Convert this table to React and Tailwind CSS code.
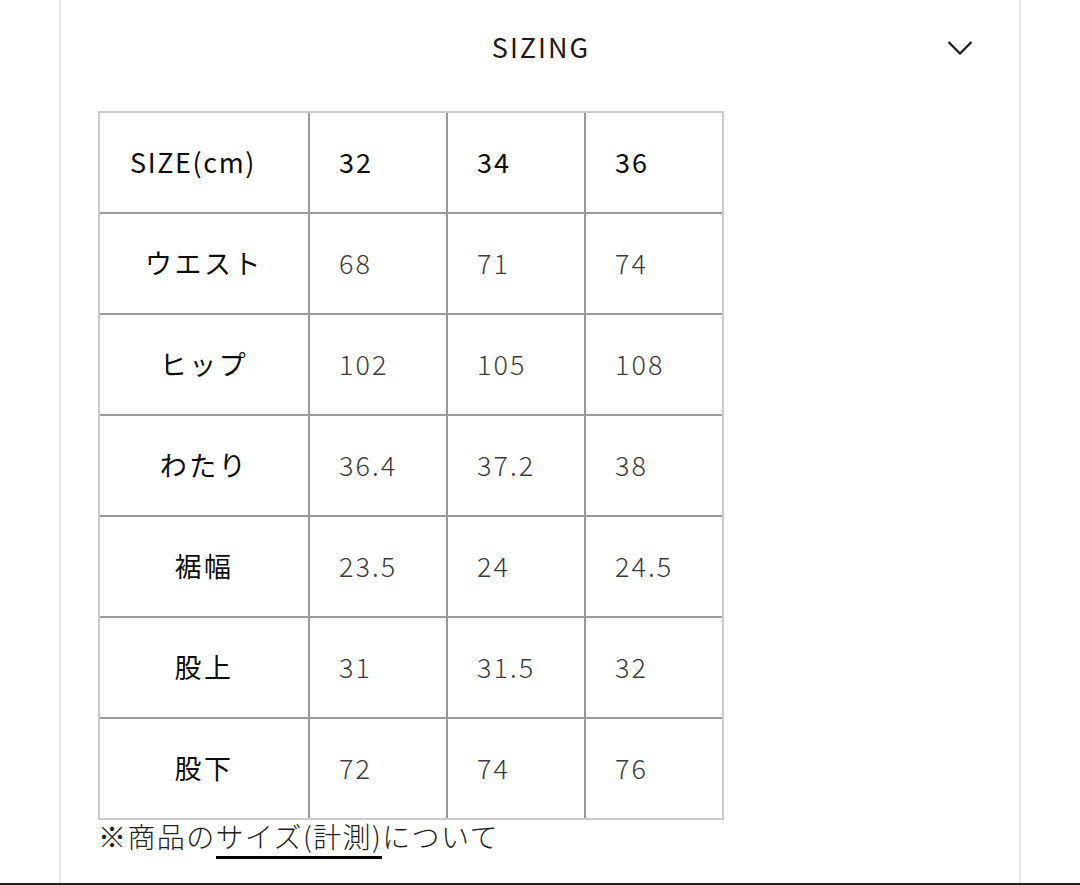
import React from 'react';

const rows = [
  { label: 'ウエスト', values: ['68', '71', '74'] },
  { label: 'ヒップ', values: ['102', '105', '108'] },
  { label: 'わたり', values: ['36.4', '37.2', '38'] },
  { label: '裾幅', values: ['23.5', '24', '24.5'] },
  { label: '股上', values: ['31', '31.5', '32'] },
  { label: '股下', values: ['72', '74', '76'] },
];

const font = { fontFamily: '"Noto Sans CJK JP", "Noto Sans", sans-serif' };

const Cell = ({ children, first, lastCol, lastRow, head, extra = '' }) => (
  <div
    className={`flex items-center border-[#9a9a9a] ${lastCol ? '' : 'border-r-2'} ${
      lastRow ? 'h-[99px]' : 'h-[101px] border-b-2'
    } ${first ? 'justify-center tracking-[2.5px]' : 'pl-[29px] tracking-[2px]'} ${
      head ? 'text-[#0d0d0d] font-normal' : 'text-[#3c3c3c] font-light'
    } ${extra}`}
  >
    {children}
  </div>
);

const App = () => {
  return (
    <div className="bg-white w-[1080px] h-[885px] flex flex-col" style={font}>
      <div className="mx-[59px] flex-1 border-x-2 border-[#e8e8e8] flex flex-col">
        {/* Header */}
        <div className="relative h-[111px] flex items-start justify-center pt-[27px]">
          <span className="text-[27px] leading-[40px] tracking-[2px] pl-[2px] text-[#1a1a1a]">SIZING</span>
          <svg
            className="absolute right-[46px] top-[40px]"
            width="26"
            height="16"
            viewBox="0 0 26 16"
            fill="none"
            stroke="#1a1a1a"
            strokeWidth="2.2"
          >
            <polyline points="1.5,2 13,13.5 24.5,2" />
          </svg>
        </div>

        {/* Table */}
        <div className="pl-[37px]">
          <div className="w-[626px] border-2 border-[#cbcbcb] grid grid-cols-[210px_138px_138px_136px] text-[27px]">
            <Cell first head extra="!tracking-[1.6px] pr-[22px]">SIZE(cm)</Cell>
            <Cell head>32</Cell>
            <Cell head>34</Cell>
            <Cell head lastCol>36</Cell>
            {rows.map((r, i) => (
              <React.Fragment key={r.label}>
                <Cell first head lastRow={i === rows.length - 1}>
                  {r.label}
                </Cell>
                {r.values.map((v, j) => (
                  <Cell key={j} lastCol={j === 2} lastRow={i === rows.length - 1}>
                    {v}
                  </Cell>
                ))}
              </React.Fragment>
            ))}
          </div>
          <p className="text-[28px] leading-[32px] tracking-[1.4px] font-light text-[#222]">
            ※商品の<span className="border-b-[3px] border-black">サイズ(計測)</span>について
          </p>
        </div>
      </div>
      <div className="h-[2px] bg-[#222]" />
    </div>
  );
};

export default App;
